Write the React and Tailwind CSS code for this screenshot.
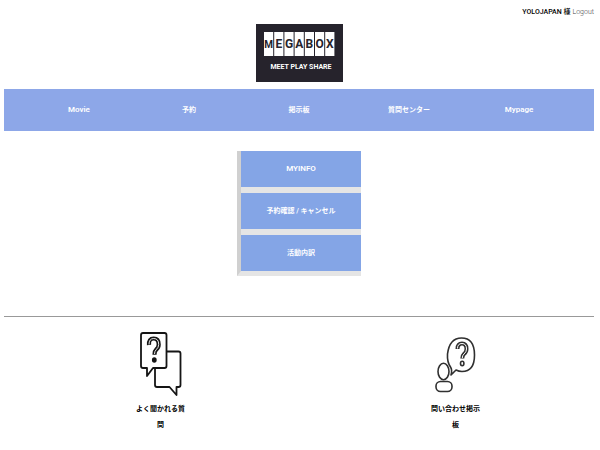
import React from "react";

const navItems = [
  { label: "Movie", size: "text-[8px]" },
  { label: "予約", size: "text-[7px]" },
  { label: "掲示板", size: "text-[7px]" },
  { label: "質問センター", size: "text-[7px]" },
  { label: "Mypage", size: "text-[8px]" },
];
const menuItems = [
  { label: "MYINFO", size: "text-[8px]" },
  { label: "予約確認 / キャンセル", size: "text-[7px]" },
  { label: "活動内訳", size: "text-[7px]" },
];

function Logo() {
  return (
    <svg viewBox="0 0 87 58" className="block h-[58px] w-[87px]" role="img" aria-label="MEGABOX MEET PLAY SHARE">
      <rect width="87" height="58" fill="#26232c" />
      {"MEGABOX".split("").map((letter, i) => (
        <g key={i}>
          <rect x={8 + i * 10.2} y="8" width="9.2" height="24" fill="#fff" />
          <text
            x={12.6 + i * 10.2}
            y="24"
            textAnchor="middle"
            fontSize={letter === "M" ? 10 : 12}
            fontWeight="700"
            fontFamily="Roboto, sans-serif"
            fill="#26232c"
          >
            {letter}
          </text>
        </g>
      ))}
      <text x="45" y="45" textAnchor="middle" fontSize="7" fontWeight="700" fontFamily="Roboto, sans-serif" fill="#fff">
        MEET PLAY SHARE
      </text>
    </svg>
  );
}

function FaqIcon() {
  return (
    <svg viewBox="0 0 42 66" className="block h-[66px] w-[42px]" fill="none" stroke="#151515" strokeWidth="1.8" strokeLinejoin="round" aria-hidden="true">
      <path d="M26.500 19.500H38.500q2 0 2 2V53q0 2-2 2H36.500V63L29.500 55H17q-2 0-2-2V37" />
      <path d="M3 1H24.500q2 0 2 2V34q0 2-2 2H13L7 44V36H3q-2 0-2-2V3q0-2 2-2z" />
      <path d="M9 13q-.5-6.500 4.700-6.500 5 0 5 6 0 3-2.500 5.200-1.700 1.500-1.700 5" strokeWidth="4.200" />
      <path d="M9 12.500q0-6 4.700-6 5 0 5 6 0 3-2.500 5.200-1.700 1.500-1.700 4.300" stroke="#fff" strokeWidth="0.900" />
      <ellipse cx="14.300" cy="28" rx="1.500" ry="1.800" fill="#151515" />
    </svg>
  );
}

function InquiryIcon() {
  return (
    <svg viewBox="0 0 42 56" className="block h-[56px] w-[42px]" fill="none" stroke="#303030" strokeWidth="1.600" strokeLinejoin="round" aria-hidden="true">
      <path d="M15.500 30Q12 25 12.500 17 14.500 1 26.500 1 39.500 1 39.500 18 39.500 34.500 27 34.500 24 34.500 21 33L16 38Q17.500 33 15.500 30z" />
      <ellipse cx="8.500" cy="34.500" rx="5.500" ry="8.200" />
      <rect x="1" y="44.500" width="16" height="10" rx="4.500" />
      <path d="M22.500 12q0-5.500 4.500-5.500 4.500 0 4.500 5.500 0 3-2.500 5-1.700 1.500-1.700 4.500" strokeWidth="4" />
      <path d="M22.500 11.500q0-5 4.500-5 4.500 0 4.500 5.500 0 3-2.500 5-1.700 1.500-1.700 4" stroke="#fff" strokeWidth="1" />
      <ellipse cx="27.200" cy="26.500" rx="1.700" ry="2.200" />
    </svg>
  );
}

function SupportLink({ icon, label }) {
  return (
    <div className="flex justify-center pl-[18px]">
      <a href="#" className="flex w-[50px] flex-col items-center text-center text-[7px] leading-4 font-bold text-black">
        <span className="flex h-[70px] items-center pb-[2px]">{icon}</span>
        {label}
      </a>
    </div>
  );
}

export default function App() {
  return (
    <div
      lang="ja"
      className="bg-white pr-[6px] pl-1 font-[Roboto,'Noto_Sans_CJK_JP',sans-serif] text-black"
    >
      <header>
        <div className="flex h-6 items-center justify-end gap-[2px] text-[7px]">
          <span className="font-medium">YOLOJAPAN 様</span>
          <a href="#" className="font-light text-[#444444]">Logout</a>
        </div>
        <a href="#" className="mx-auto flex w-fit">
          <Logo />
        </a>
        <nav className="mt-[7px] flex h-[42px] items-center bg-[#8da7e8] px-5">
          {navItems.map(({ label, size }) => (
            <a key={label} href="#" className={`${size} flex-1 text-center font-semibold whitespace-nowrap text-white`}>
              {label}
            </a>
          ))}
        </nav>
      </header>

      <main className="mt-5 flex justify-center">
        <div className="flex w-[124px] flex-col gap-[6px] border-b-[5px] border-l-4 border-b-[#e5e5e5] border-l-[#d0d0d0] bg-[#e5e5e5]">
          {menuItems.map(({ label, size }) => (
            <button
              key={label}
              type="button"
              className={`${size} h-9 bg-[#84a5e6] text-center font-semibold whitespace-nowrap text-white`}
            >
              {label}
            </button>
          ))}
        </div>
      </main>

      <footer className="mt-10 grid grid-cols-2 border-t border-[#999999] pt-[14px]">
        <SupportLink icon={<FaqIcon />} label="よく聞かれる質問" />
        <SupportLink icon={<InquiryIcon />} label="問い合わせ掲示板" />
      </footer>
    </div>
  );
}
